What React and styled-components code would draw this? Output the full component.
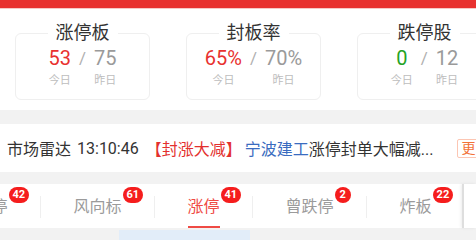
import React from "react";
import styled, { createGlobalStyle } from "styled-components";

const GlobalStyle = createGlobalStyle`
  body {
    margin: 0;
    background: #f2f2f2;
    font-family: Roboto, "Noto Sans CJK SC", sans-serif;
  }
`;

const Page = styled.div`
  width: 476px;
  height: 240px;
  overflow: hidden;
  background: #f2f2f2;
  display: flex;
  flex-direction: column;
`;

const TopBar = styled.div`
  height: 8px;
  background: #e8312f;
  border-bottom: 1px solid #f6c9c8;
  flex-shrink: 0;
`;

const Stats = styled.div`
  background: #fff;
  display: flex;
  gap: 36px;
  padding: 24px 0 10px 15px;
  overflow: hidden;
  flex-shrink: 0;
`;

const Card = styled.div`
  flex-shrink: 0;
  width: 135px;
  height: 67px;
  box-sizing: border-box;
  border: 1px solid #efefef;
  border-radius: 6px;
  display: flex;
  flex-direction: column;
  align-items: center;
`;

const CardTitle = styled.div`
  margin-top: -12px;
  padding: 0 8px;
  background: #fff;
  font-size: 18px;
  line-height: 22px;
  color: #333;
`;

const ValueRow = styled.div`
  display: flex;
  align-items: flex-start;
  justify-content: center;
  margin-top: 2px;
`;

const Col = styled.div`
  display: flex;
  flex-direction: column;
  align-items: center;
`;

const Value = styled.div`
  font-size: 20px;
  line-height: 24px;
  color: ${(p) => p.color || "#9a9a9a"};
`;

const Slash = styled.div`
  font-size: 17px;
  line-height: 24px;
  color: #b0b0b0;
  margin: 0 8px;
`;

const DayLabel = styled.div`
  margin-top: 4px;
  font-size: 11px;
  line-height: 14px;
  color: #bdbdbd;
`;

const Radar = styled.div`
  margin-top: 14px;
  height: 48px;
  flex-shrink: 0;
  background: #fff;
  display: flex;
  align-items: center;
  padding-left: 7px;
  white-space: nowrap;
  overflow: hidden;
  font-size: 16px;
  color: #333;
`;

const Time = styled.span`
  margin-left: 6px;
`;

const Tag = styled.span`
  margin-left: 7px;
  color: #e3302e;
`;

const Stock = styled.span`
  margin-left: 3px;
  color: #3a6cc0;
`;

const MoreBtn = styled.span`
  flex-shrink: 0;
  margin-left: 24px;
  padding: 0 3px;
  border: 1px solid #fcc6b3;
  border-radius: 2px;
  font-size: 14px;
  line-height: 17px;
  color: #f27138;
`;

const TabBar = styled.div`
  margin-top: 12px;
  height: 44px;
  flex-shrink: 0;
  background: #fff;
  display: flex;
`;

const TabScroll = styled.div`
  flex: 1;
  min-width: 0;
  overflow: hidden;
  display: flex;
  align-items: stretch;
`;

const TabStrip = styled.div`
  display: flex;
  align-items: stretch;
  margin-left: -57px;
`;

const Tab = styled.div`
  position: relative;
  flex-shrink: 0;
  display: flex;
  align-items: center;
  padding: 0 32.5px;
  font-size: 16px;
  color: ${(p) => (p.active ? "#ef4a44" : "#9b9b9b")};

  &::after {
    content: "";
    display: ${(p) => (p.active ? "block" : "none")};
    position: absolute;
    left: 32.5px;
    right: 32.5px;
    bottom: 0;
    height: 2px;
    background: #ef4a44;
  }
`;

const TabText = styled.span`
  position: relative;
  line-height: 22px;
  margin-top: 2px;
`;

const Badge = styled.span`
  position: absolute;
  left: calc(100% + 1px);
  top: -9px;
  min-width: 16px;
  height: 16px;
  box-sizing: border-box;
  padding: 0 4px;
  border-radius: 8px;
  background: #f51d1d;
  color: #fff;
  font-family: Roboto, sans-serif;
  font-weight: 700;
  font-size: 11px;
  line-height: 16px;
  text-align: center;
`;

const Divider = styled.div`
  flex-shrink: 0;
  width: 1px;
  height: 22px;
  align-self: center;
  margin-top: 2px;
  background: #efefef;
`;

const RightEdge = styled.div`
  flex-shrink: 0;
  width: 12px;
  border-left: 2px solid #dedede;
  box-shadow: -1px 0 3px rgba(0, 0, 0, 0.08);
  background: #fff;
`;

const Bottom = styled.div`
  flex: 1;
  padding-top: 2px;
  padding-left: 119px;
  display: flex;
`;

const BlueBox = styled.div`
  width: 131px;
  background: #e2edf9;
`;

const stats = [
  { title: "涨停板", today: "53", yesterday: "75", color: "#e8312f" },
  { title: "封板率", today: "65%", yesterday: "70%", color: "#e8312f" },
  { title: "跌停股", today: "0", yesterday: "12", color: "#25a325" },
];

const tabs = [
  { name: "跌停", count: 42 },
  { name: "风向标", count: 61 },
  { name: "涨停", count: 41, active: true },
  { name: "曾跌停", count: 2 },
  { name: "炸板", count: 22 },
];

export default function App() {
  return (
    <Page>
      <GlobalStyle />
      <TopBar />
      <Stats>
        {stats.map((s) => (
          <Card key={s.title}>
            <CardTitle>{s.title}</CardTitle>
            <ValueRow>
              <Col>
                <Value color={s.color}>{s.today}</Value>
                <DayLabel>今日</DayLabel>
              </Col>
              <Slash>/</Slash>
              <Col>
                <Value>{s.yesterday}</Value>
                <DayLabel>昨日</DayLabel>
              </Col>
            </ValueRow>
          </Card>
        ))}
      </Stats>
      <Radar>
        <span>市场雷达</span>
        <Time>13:10:46</Time>
        <Tag>【封涨大减】</Tag>
        <Stock>宁波建工</Stock>
        <span>涨停封单大幅减...</span>
        <MoreBtn>更多</MoreBtn>
      </Radar>
      <TabBar>
        <TabScroll>
          <TabStrip>
            {tabs.map((t, i) => (
              <React.Fragment key={t.name}>
                {i > 0 && <Divider />}
                <Tab active={t.active}>
                  <TabText>
                    {t.name}
                    <Badge>{t.count}</Badge>
                  </TabText>
                </Tab>
              </React.Fragment>
            ))}
          </TabStrip>
        </TabScroll>
        <RightEdge />
      </TabBar>
      <Bottom>
        <BlueBox />
      </Bottom>
    </Page>
  );
}
